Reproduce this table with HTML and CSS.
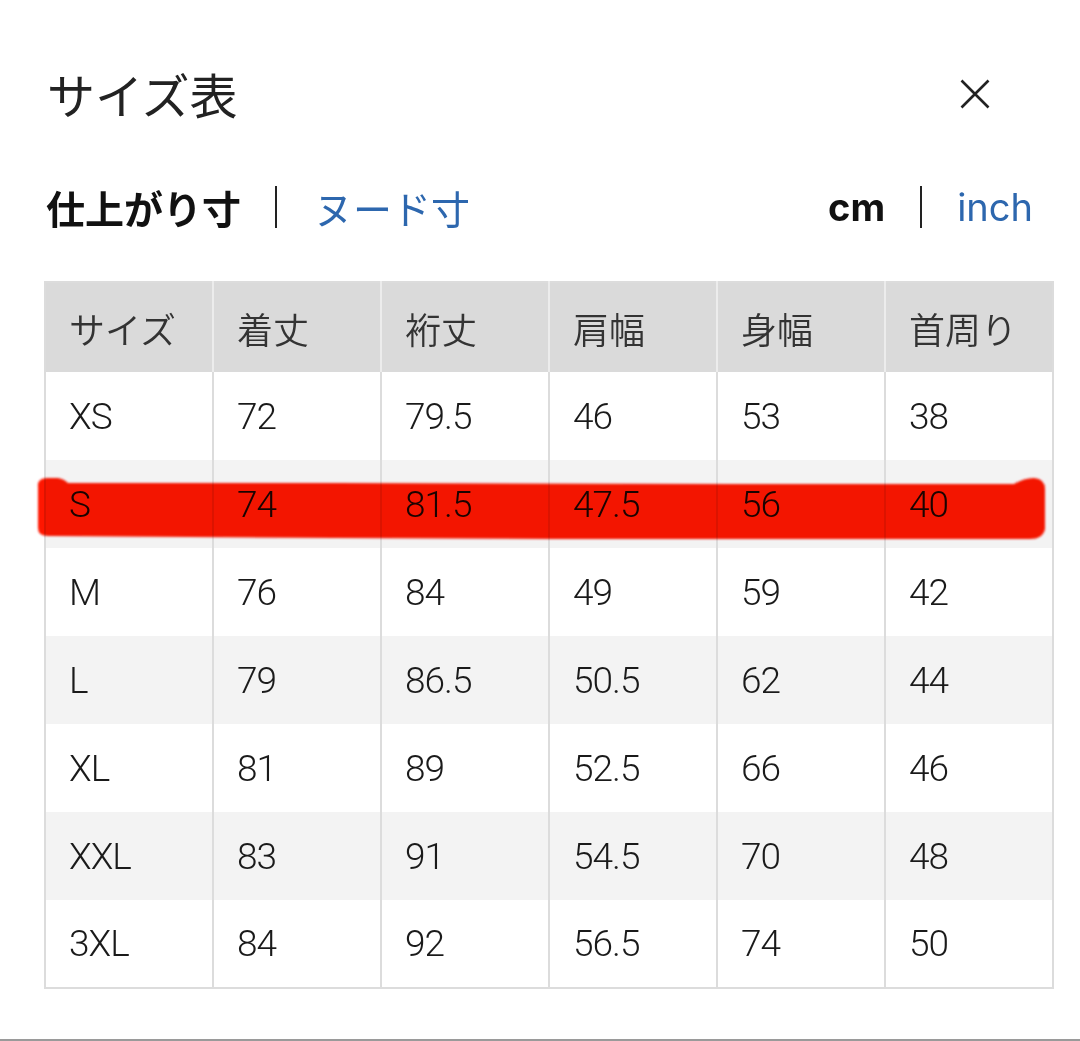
FILE: index.html
```html
<!DOCTYPE html>
<html lang="ja">
<head>
<meta charset="utf-8">
<title>サイズ表</title>
<link rel="stylesheet" href="styles.css">
</head>
<body>
<div class="sheet">
  <div class="head">
    <h1 class="title">サイズ表</h1>
    <button class="close" aria-label="閉じる">
      <svg width="30" height="30" viewBox="0 0 30 30"><path d="M1.5 1.5L28.5 28.5M28.5 1.5L1.5 28.5" stroke="#222" stroke-width="2.6" fill="none"/></svg>
    </button>
  </div>
  <div class="tabs">
    <div class="group">
      <span class="on jp">仕上がり寸</span>
      <span class="sep"></span>
      <span class="off jp">ヌード寸</span>
    </div>
    <div class="group units">
      <span class="on lat">cm</span>
      <span class="sep"></span>
      <span class="off lat">inch</span>
    </div>
  </div>
  <div class="tablewrap">
    <table class="sizes">
      <thead>
        <tr><th>サイズ</th><th>着丈</th><th>裄丈</th><th>肩幅</th><th>身幅</th><th>首周り</th></tr>
      </thead>
      <tbody>
        <tr><td>XS</td><td>72</td><td>79.5</td><td>46</td><td>53</td><td>38</td></tr>
        <tr><td>S</td><td>74</td><td>81.5</td><td>47.5</td><td>56</td><td>40</td></tr>
        <tr><td>M</td><td>76</td><td>84</td><td>49</td><td>59</td><td>42</td></tr>
        <tr><td>L</td><td>79</td><td>86.5</td><td>50.5</td><td>62</td><td>44</td></tr>
        <tr><td>XL</td><td>81</td><td>89</td><td>52.5</td><td>66</td><td>46</td></tr>
        <tr><td>XXL</td><td>83</td><td>91</td><td>54.5</td><td>70</td><td>48</td></tr>
        <tr><td>3XL</td><td>84</td><td>92</td><td>56.5</td><td>74</td><td>50</td></tr>
      </tbody>
    </table>
    <svg class="marker" width="1016" height="72" viewBox="0 0 1016 72">
      <defs><filter id="soft" x="-2%" y="-20%" width="104%" height="140%"><feGaussianBlur stdDeviation="1"/></filter></defs>
      <path filter="url(#soft)" fill="#ff1800" d="M4 14 Q3 6 12 5 L24 5 Q30 6 34 10 L300 10 L700 11 L980 11 Q990 5 1000 5 Q1011 6 1011 16 L1011 56 Q1009 66 996 66 L520 66 L300 65 L14 63 Q4 63 4 55 Z"/>
    </svg>
  </div>
</div>
<div class="bottombar"></div>
</body>
</html>
```
FILE: styles.css
```css
html, body {
  margin: 0;
  padding: 0;
  background: #fff;
}
body {
  font-family: "Noto Sans CJK JP", sans-serif;
  color: #222;
  width: 1080px;
  height: 1041px;
  overflow: hidden;
}
.sheet {
  padding: 70px 28px 0 44px;
}
.head {
  display: flex;
  justify-content: space-between;
  align-items: center;
  height: 48px;
}
.title {
  margin: -2px 0 0 3px;
  font-size: 48px;
  line-height: 48px;
  font-weight: 400;
  color: #222;
}
.close {
  margin: 0 62px 0 0;
  padding: 0;
  border: 0;
  background: none;
  width: 30px;
  height: 30px;
  display: block;
}
.close svg { display: block; }
.tabs {
  margin-top: 69px;
  height: 40px;
  display: flex;
  justify-content: space-between;
  align-items: center;
}
.group {
  display: flex;
  align-items: center;
}
.group .jp {
  font-family: "Noto Sans CJK JP", sans-serif;
  font-size: 39px;
  line-height: 40px;
}
.group:first-child { margin-left: 2px; }
.units { margin-right: 19px; }
.on { color: #111; font-weight: 700; }
.off { color: #2d67ae; font-weight: 400; }
.sep {
  display: block;
  width: 2px;
  height: 42px;
  background: #222;
  margin: 0 37px 0 34px;
}
.units .sep { margin: 0 35px 0 35px; }
.lat {
  font-family: "Inter", "Liberation Sans", sans-serif;
  font-size: 38px;
  line-height: 40px;
}
.lat.on { font-weight: 700; }
.tablewrap {
  position: relative;
  margin-top: 54px;
  width: 1008px;
}
.sizes {
  border-collapse: collapse;
  table-layout: fixed;
  width: 1008px;
  border: 2px solid #dcdcdc;
}
.sizes th, .sizes td {
  width: 168px;
  text-align: left;
  padding: 0 0 0 23px;
  border-left: 2px solid #dcdcdc;
  border-right: 2px solid #dcdcdc;
  box-sizing: border-box;
}
.sizes th {
  height: 90px;
  background: #dadada;
  font-family: "Noto Sans CJK JP", sans-serif;
  font-weight: 350;
  font-size: 36px;
  color: #333;
  border-left-color: #ececec;
  border-right-color: #ececec;
}
.sizes th:first-child { border-left-color: #dcdcdc; }
.sizes th:last-child { border-right-color: #dcdcdc; }
.sizes td {
  height: 88px;
  font-family: "Roboto", "Liberation Sans", sans-serif;
  font-weight: 300;
  font-size: 37px;
  letter-spacing: -1px;
  color: #1a1a1a;
}
.sizes tbody tr:nth-child(even) td { background: #f3f3f3; }
.marker {
  position: absolute;
  left: -10px;
  top: 192px;
  mix-blend-mode: multiply;
  pointer-events: none;
}
.bottombar {
  position: absolute;
  left: 0;
  top: 1039px;
  width: 1080px;
  height: 2px;
  background: #9a9a9a;
}
```
